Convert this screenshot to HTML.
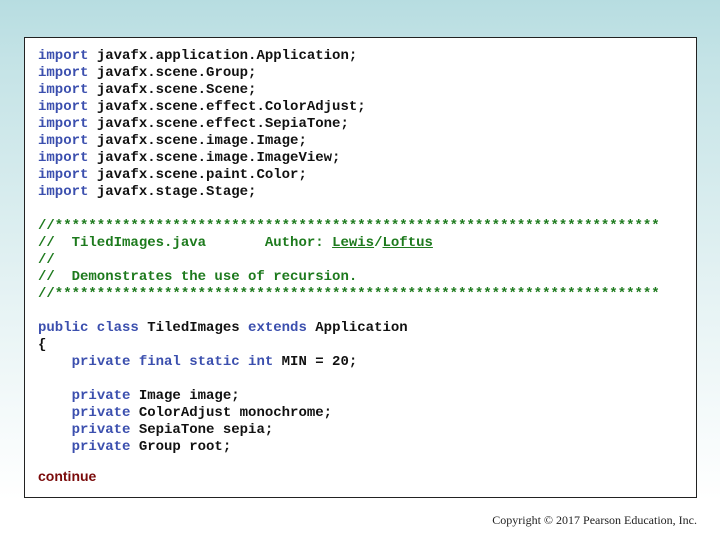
<!DOCTYPE html>
<html><head><meta charset="utf-8"><style>
html,body{margin:0;padding:0}
body{width:720px;height:540px;position:relative;overflow:hidden;
background:linear-gradient(to bottom,#b7dde1 0px,#c4e3e6 60px,#e6f3f4 300px,#ffffff 500px);
font-family:"Liberation Sans",sans-serif}
.box{position:absolute;left:24px;top:37px;width:671px;height:459px;border:1px solid #222;background:#fff}
pre{position:absolute;left:38px;top:0;margin:0;font-family:"Liberation Mono",monospace;font-size:14px;font-weight:bold;line-height:17px;color:#111;letter-spacing:0}
.k{color:#3b4fae}.c{color:#1d7a1d}.u{text-decoration:underline}
.cont{position:absolute;left:38px;top:468px;color:#7a0a0a;font-weight:bold;font-size:14px}
.copy{position:absolute;right:23px;top:513px;font-family:"Liberation Serif",serif;font-size:12px;color:#222}
</style></head><body>
<div class="box"></div>
<pre style="top:48px"><span class="k">import</span> javafx.application.Application;
<span class="k">import</span> javafx.scene.Group;
<span class="k">import</span> javafx.scene.Scene;
<span class="k">import</span> javafx.scene.effect.ColorAdjust;
<span class="k">import</span> javafx.scene.effect.SepiaTone;
<span class="k">import</span> javafx.scene.image.Image;
<span class="k">import</span> javafx.scene.image.ImageView;
<span class="k">import</span> javafx.scene.paint.Color;
<span class="k">import</span> javafx.stage.Stage;

<span class="c">//************************************************************************
//  TiledImages.java       Author: <span class="u">Lewis</span>/<span class="u">Loftus</span>
//
//  Demonstrates the use of recursion.
//************************************************************************</span>

<span class="k">public class</span> TiledImages <span class="k">extends</span> Application
{
    <span class="k">private final static int</span> MIN = 20;

    <span class="k">private</span> Image image;
    <span class="k">private</span> ColorAdjust monochrome;
    <span class="k">private</span> SepiaTone sepia;
    <span class="k">private</span> Group root;</pre>
<div class="cont">continue</div>
<div class="copy">Copyright © 2017 Pearson Education, Inc.</div>
</body></html>
